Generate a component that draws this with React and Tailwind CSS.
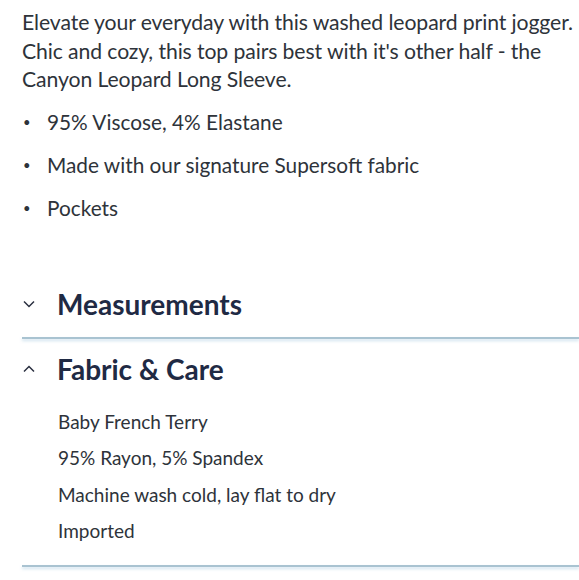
const bullets = ['95% Viscose, 4% Elastane', 'Made with our signature Supersoft fabric', 'Pockets']
const care = ['Baby French Terry', '95% Rayon, 5% Spandex', 'Machine wash cold, lay flat to dry', 'Imported']

function Chevron({ up }) {
  return (
    <svg width="12" height="8" viewBox="0 0 12 8" className="shrink-0">
      <path
        d={up ? 'M1 6.5L6 1.5L11 6.5' : 'M1 1.5L6 6.5L11 1.5'}
        fill="none"
        stroke="#2a3040"
        strokeWidth="1.5"
      />
    </svg>
  )
}

function Divider() {
  return <div className="h-[2px] bg-[#a9c3d1] shadow-[0_2px_3px_rgba(170,205,225,0.6)]" />
}

export default function App() {
  return (
    <div className="bg-white w-[579px] h-[580px] overflow-hidden pl-[22px] font-['Lato',sans-serif] text-[#2e333a]">
      <p className="pt-[8px] text-[21.2px] leading-[28.5px] tracking-[-0.1px]">
        Elevate your everyday with this washed leopard print jogger. Chic and cozy, this top pairs best with it's
        other half - the Canyon Leopard Long Sleeve.
      </p>
      <ul className="mt-[14px] flex flex-col gap-[15px]">
        {bullets.map((b) => (
          <li key={b} className="flex items-center text-[20.8px] leading-[28px]">
            <span className="w-[25px] pl-[1px] text-[13px]">•</span>
            <span>{b}</span>
          </li>
        ))}
      </ul>
      <div className="mt-[62px] flex items-center gap-[22px] pl-[1px] h-[40px]">
        <Chevron />
        <h2 className="font-bold text-[28px] text-[#1f2a44]">Measurements</h2>
      </div>
      <div className="mt-[13px]">
        <Divider />
      </div>
      <div className="mt-[10px] flex items-center gap-[22px] pl-[1px] h-[40px]">
        <Chevron up />
        <h2 className="font-bold text-[28px] text-[#1f2a44]">Fabric &amp; Care</h2>
      </div>
      <div className="pl-[36px] mt-[20px] flex flex-col gap-[10.5px] text-[19px] leading-[26px]">
        {care.map((c) => (
          <div key={c}>{c}</div>
        ))}
      </div>
      <div className="mt-[21px]">
        <Divider />
      </div>
    </div>
  )
}
